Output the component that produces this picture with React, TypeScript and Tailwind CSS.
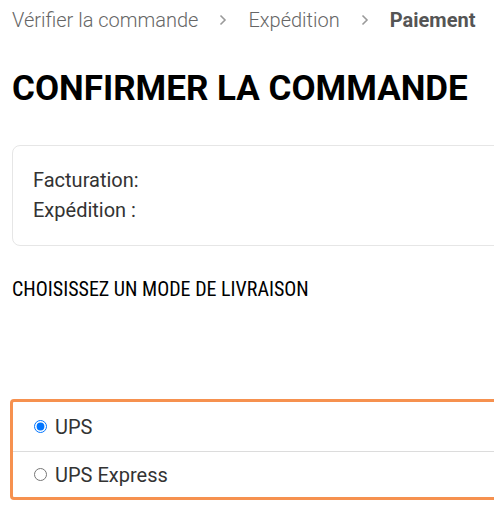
import { useState } from "react";

const shippingOptions = [
  { id: "ups", label: "UPS" },
  { id: "ups-express", label: "UPS Express" },
];

function Chevron() {
  return (
    <svg width="10" height="12" viewBox="0 0 10 12" className="mx-5 shrink-0">
      <path d="M2.5 1.5 L7 6 L2.5 10.5" fill="none" stroke="#9a9a9a" strokeWidth="1.6" />
    </svg>
  );
}

export default function App() {
  const [shipping, setShipping] = useState("ups");

  return (
    <div className="w-[494px] h-[522px] overflow-hidden bg-white font-['Roboto',sans-serif]">
      <div className="w-[560px] pl-3">
        <nav className="flex items-center h-[42px] pb-[2px] text-[20px] text-[#666]">
          <span className="font-light">Vérifier la commande</span>
          <Chevron />
          <span className="font-light">Expédition</span>
          <Chevron />
          <span className="font-bold text-[#555]">Paiement</span>
        </nav>

        <h1 className="mt-[27px] text-[35px] leading-[40px] font-bold text-black [font-stretch:89%]">
          CONFIRMER LA COMMANDE
        </h1>

        <div className="mt-[36px] rounded-lg border border-[#e6e6e6] px-5 pt-[19px] pb-[20px] text-[20px] leading-[30px] text-[#333]">
          <p>Facturation:</p>
          <p>Expédition :</p>
        </div>

        <h2 className="mt-[31px] text-[20px] leading-[24px] font-normal text-black [font-stretch:condensed]">
          CHOISISSEZ UN MODE DE LIVRAISON
        </h2>

        <div className="mt-[98px] -ml-[2px] rounded-[4px] border-[3px] border-[#f6914f]">
          {shippingOptions.map((option, index) => (
            <label
              key={option.id}
              className={`flex items-center pl-[21px] gap-[8px] text-[20px] text-[#333] cursor-pointer ${
                index > 0 ? "h-[46px] border-t border-[#dcdcdc]" : "h-[49px]"
              }`}
            >
              <input
                type="radio"
                name="shipping"
                checked={shipping === option.id}
                onChange={() => setShipping(option.id)}
                className="m-0 w-[13px] h-[13px]"
              />
              <span>{option.label}</span>
            </label>
          ))}
        </div>
      </div>
    </div>
  );
}
